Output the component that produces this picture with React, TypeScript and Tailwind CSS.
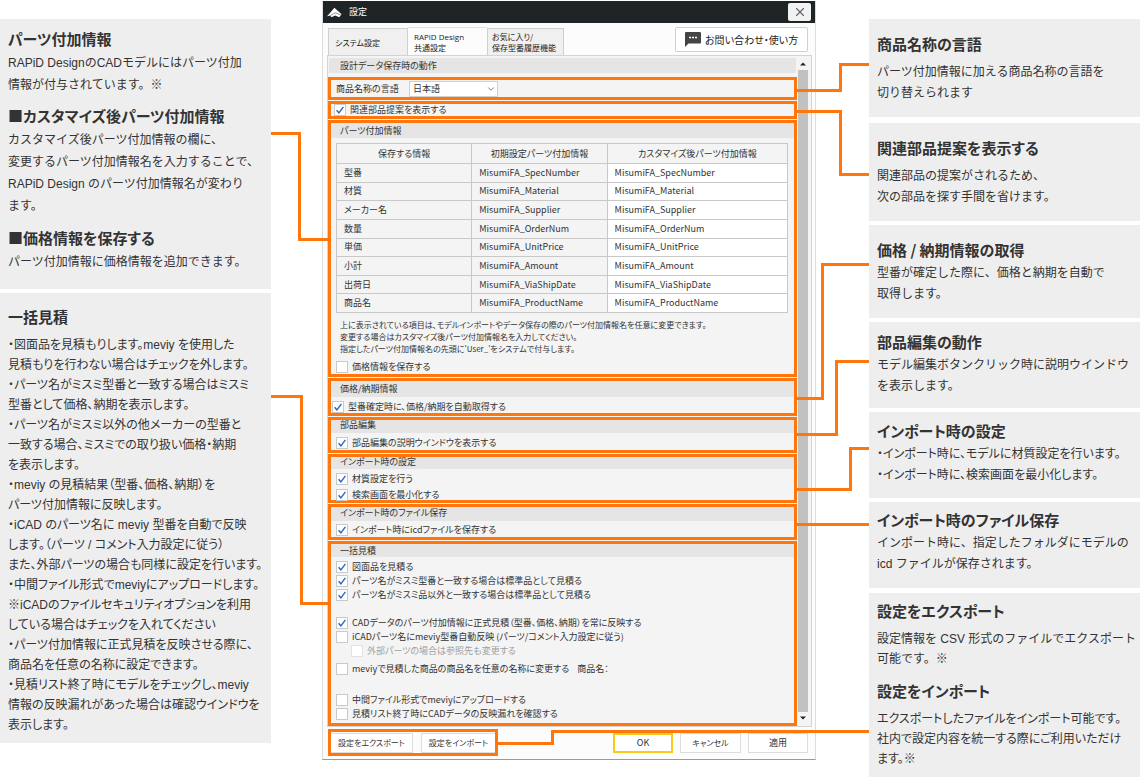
import type { ReactNode } from 'react';
import { ChevronDown, X } from 'lucide-react';

const tableRows = [
  { label: '型番', name: 'MisumiFA_SpecNumber' },
  { label: '材質', name: 'MisumiFA_Material' },
  { label: 'メーカー名', name: 'MisumiFA_Supplier' },
  { label: '数量', name: 'MisumiFA_OrderNum' },
  { label: '単価', name: 'MisumiFA_UnitPrice' },
  { label: '小計', name: 'MisumiFA_Amount' },
  { label: '出荷日', name: 'MisumiFA_ViaShipDate' },
  { label: '商品名', name: 'MisumiFA_ProductName' },
];

const leftLines = ['M0 133.5H28.5V239.5H57', 'M0 396.5H30.5V603.5H57'];

// x runs from 0 (button row) to 371 (right column)
const rightLines = [
  'M298 90.5H342.5V64.5H371',
  'M298 111.5H342.5V174.5H371',
  'M298 398.5H324.5V264.5H371',
  'M298 434.5H338.5V361.5H371',
  'M298 489.5H352.5V448.5H371',
  'M298 524.5H371',
  'M0 743.5H54.5V731.5H371',
];

function NoteTitle({ children, className = '' }: { children: ReactNode; className?: string }) {
  return (
    <h2
      className={`font-['Noto_Sans_CJK_JP',sans-serif] text-[15px] leading-6 font-bold [font-feature-settings:'palt'] ${className}`}
    >
      {children}
    </h2>
  );
}

function NoteText({
  lines,
  tight = false,
  className = 'mt-px leading-[21px]',
}: {
  lines: string[];
  tight?: boolean;
  className?: string;
}) {
  return (
    <p className={`text-[12px] whitespace-nowrap ${tight ? "[font-feature-settings:'palt']" : ''} ${className}`}>
      {lines.map((line) => (
        <span key={line} className="block">
          {line}
        </span>
      ))}
    </p>
  );
}

function Check({
  label,
  checked = false,
  disabled = false,
  className = '',
}: {
  label: string;
  checked?: boolean;
  disabled?: boolean;
  className?: string;
}) {
  return (
    <label
      className={`flex h-[14px] items-center gap-1 whitespace-nowrap ${disabled ? 'text-[#a0a0a0]' : ''} ${className}`}
    >
      <span className="relative flex">
        <input
          type="checkbox"
          defaultChecked={checked}
          disabled={disabled}
          className="peer size-3 appearance-none border border-[#c9c9c9] bg-white disabled:border-[#e2e2e2]"
        />
        <svg
          viewBox="0 0 12 12"
          className="pointer-events-none absolute inset-0 hidden size-3 peer-checked:block"
          fill="none"
          stroke="#2a66c4"
          strokeWidth="1.4"
        >
          <path d="M2.6 6.2 4.9 8.8 9.4 2.8" />
        </svg>
      </span>
      {label}
    </label>
  );
}

function Frame({ children, className = '' }: { children: ReactNode; className?: string }) {
  return <section className={`border-[3px] border-[#ff760d] ${className}`}>{children}</section>;
}

function Band({ children, className = '' }: { children: ReactNode; className?: string }) {
  return <h3 className={`flex items-center bg-[#e5e5e5] pl-[9px] ${className}`}>{children}</h3>;
}

function DialogButton({ children, className = '' }: { children: ReactNode; className?: string }) {
  return (
    <button type="button" className={`h-5 bg-white text-center whitespace-nowrap ${className}`}>
      {children}
    </button>
  );
}

function SettingsDialog() {
  return (
    <div className="border-x border-b border-[#dcdcdc] border-b-[#9a9a9a] bg-[#fcfcfc] font-['Noto_Sans_CJK_JP',sans-serif] text-[9px] leading-3 text-[#333] [font-feature-settings:'palt']">
      <header className="flex h-[22px] items-center bg-[#1f2427] pr-1 pl-1 text-white">
        <svg viewBox="0 0 15 11" className="h-[11px] w-[15px]" fill="#fff">
          <path d="M0 9.200 2.800 6.200 7.400.8 14.600 7.200 12.200 10.200 8.200 8.600 4.400 10.200 3.200 8.600Z" />
          <path d="M3.400 8.400 8.400 5.800 13.600 7.800" fill="none" stroke="#1f2427" strokeWidth="0.5" />
        </svg>
        <h1 className="ml-[7px]">設定</h1>
        <button
          type="button"
          aria-label="閉じる"
          className="ml-auto flex h-[18px] w-[23px] items-center justify-center rounded-xs bg-[#f2f2f2] text-[#666]"
        >
          <X size={14} strokeWidth={2} />
        </button>
      </header>

      <div className="flex h-8 items-end pr-[7px] pl-[5px] text-[8px] leading-[11px] text-[#222]">
        <button type="button" className="h-[27px] w-20 border border-b-0 border-[#cfcfcf] bg-[#f0f0f0] pl-[6px] text-left">
          システム設定
        </button>
        <button
          type="button"
          className="h-7 w-[79px] border-t border-[#e2e2e2] bg-[#fcfcfc] pl-[6px] text-left font-['Open_Sans','Noto_Sans_CJK_JP',sans-serif]"
        >
          RAPiD Design
          <br />
          共通設定
        </button>
        <button
          type="button"
          className="h-[27px] w-[77px] border border-b-0 border-[#cfcfcf] bg-[#f0f0f0] pl-1 text-left whitespace-nowrap"
        >
          お気に入り/
          <br />
          保存型番履歴機能
        </button>
        <button
          type="button"
          className="mb-[3px] ml-auto flex h-[25px] w-[133px] items-center gap-1 rounded-xs border border-[#cfcfcf] bg-white pl-[9px] text-[10px] whitespace-nowrap"
        >
          <svg viewBox="0 0 16 15" className="h-[15px] w-4">
            <path d="M1 0H15Q16 0 16 1V10.500Q16 11.500 15 11.500H3.500L0 15V1Q0 0 1 0Z" fill="#444" />
            <path d="M4 5.500h2M7 5.500h2M10 5.500h2" stroke="#fff" strokeWidth="1.600" />
          </svg>
          お問い合わせ・使い方
        </button>
      </div>

      <div className="mr-[3px] ml-1 flex border border-[#d4d4d4] bg-[#f4f4f4] pr-[3px]">
        <div className="flex min-w-0 flex-1 flex-col gap-px pt-[2px]">
          <Band className="mx-px mb-[3px] h-[15px] pl-[11px]">設計データ保存時の動作</Band>

          <Frame className="flex h-[23px] items-center pl-[5px]">
            <label htmlFor="language" className="w-[73px]">
              商品名称の言語
            </label>
            <div className="relative">
              <select
                id="language"
                className="block h-4 w-[89px] appearance-none border border-[#d0d0d0] bg-white pl-[3px] leading-3"
              >
                <option>日本語</option>
              </select>
              <ChevronDown
                size={10}
                strokeWidth={2}
                className="pointer-events-none absolute top-[3px] right-[2px] text-[#666]"
              />
            </div>
          </Frame>

          <Frame className="flex h-[18px] items-center pl-[3px]">
            <Check label="関連部品提案を表示する" checked />
          </Frame>

          <Frame>
            <Band className="h-[15px]">パーツ付加情報</Band>
            <div className="pt-[5px] pr-[6px] pl-[5px]">
              <table className="h-[170px] w-full table-fixed border-collapse">
                <thead>
                  <tr className="h-5">
                    <th className="w-[30%] border border-[#c8c8c8] font-normal">保存する情報</th>
                    <th className="w-[30%] border border-[#c8c8c8] font-normal">初期設定パーツ付加情報</th>
                    <th className="border border-[#c8c8c8] font-normal">カスタマイズ後パーツ付加情報</th>
                  </tr>
                </thead>
                <tbody>
                  {tableRows.map((row) => (
                    <tr key={row.name}>
                      <td className="border border-[#c8c8c8] pl-[7px]">{row.label}</td>
                      <td className="border border-[#c8c8c8] pl-[7px]">{row.name}</td>
                      <td className="border border-[#c8c8c8] bg-white pl-[7px]">
                        <input
                          type="text"
                          aria-label={`${row.label}のカスタマイズ後パーツ付加情報`}
                          defaultValue={row.name}
                          className="block h-3 w-full bg-transparent"
                        />
                      </td>
                    </tr>
                  ))}
                </tbody>
              </table>
              <p className="mt-[6px] pl-1 text-[8px] whitespace-nowrap">
                上に表示されている項目は、モデルインポートやデータ保存の際のパーツ付加情報名を任意に変更できます。
                <br />
                変更する場合はカスタマイズ後パーツ付加情報名を入力してください。
                <br />
                指定したパーツ付加情報名の先頭に'User_'をシステムで付与します。
              </p>
              <Check label="価格情報を保存する" className="mt-[5px]" />
            </div>
          </Frame>

          <Frame className="h-[38px]">
            <Band className="h-4">価格/納期情報</Band>
            <Check label="型番確定時に、価格/納期を自動取得する" checked className="mt-[3px] ml-px" />
          </Frame>

          <Frame className="h-9">
            <Band className="h-[13px] pb-1">部品編集</Band>
            <Check label="部品編集の説明ウインドウを表示する" checked className="mt-[3px] ml-[5px]" />
          </Frame>

          <Frame className="h-[49px]">
            <Band className="h-3 pb-[3px]">インポート時の設定</Band>
            <div className="flex flex-col gap-[2px] pt-[3px] pl-[5px]">
              <Check label="材質設定を行う" checked />
              <Check label="検索画面を最小化する" checked />
            </div>
          </Frame>

          <Frame className="h-9">
            <Band className="h-[14px] pb-[2px]">インポート時のファイル保存</Band>
            <Check label="インポート時にicdファイルを保存する" checked className="mt-[2px] ml-[5px]" />
          </Frame>

          <Frame>
            <Band className="h-[13px]">一括見積</Band>
            <div className="pt-[3px] pb-[2px] pl-[5px]">
              <Check label="図面品を見積る" checked />
              <Check label="パーツ名がミスミ型番と一致する場合は標準品として見積る" checked />
              <Check label="パーツ名がミスミ品以外と一致する場合は標準品として見積る" checked />
              <Check
                label="CADデータのパーツ付加情報に正式見積（型番、価格、納期）を常に反映する"
                checked
                className="mt-[14px]"
              />
              <Check label="iCADパーツ名にmeviy型番自動反映 (パーツ/コメント入力設定に従う)" />
              <Check label="外部パーツの場合は参照先も変更する" disabled className="ml-[15px]" />
              <div className="mt-1 flex items-center gap-2">
                <Check label="meviyで見積した商品の商品名を任意の名称に変更する" />
                <span>商品名：</span>
              </div>
              <Check label="中間ファイル形式でmeviyにアップロードする" className="mt-[17px]" />
              <Check label="見積リスト終了時にCADデータの反映漏れを確認する" />
            </div>
          </Frame>
        </div>

        <div aria-hidden="true" className="ml-px flex w-[10px] flex-col items-center">
          <svg viewBox="0 0 10 14" className="h-[14px] w-[10px]" fill="#222">
            <path d="M2 9.500 5 6.500 8 9.500Z" />
          </svg>
          <div className="w-full flex-1 bg-[#c1c1c1]" />
          <svg viewBox="0 0 10 14" className="h-[14px] w-[10px]" fill="#222">
            <path d="M2 4.500 5 7.500 8 4.500Z" />
          </svg>
        </div>
      </div>

      <footer className="mt-[2px] flex items-center justify-between pr-[7px] pb-[3px] pl-[5px]">
        <div className="flex h-[27px] items-center gap-2 border-[3px] border-[#ff760d] text-[8px]">
          <DialogButton className="w-[82px] border border-l-0 border-[#ddd]">設定をエクスポート</DialogButton>
          <DialogButton className="w-[74px] border border-r-0 border-[#ddd]">設定をインポート</DialogButton>
        </div>
        <div className="flex gap-[7px]">
          <DialogButton className="w-[60px] border-2 border-[#fbc91b]">OK</DialogButton>
          <DialogButton className="w-[61px] border border-[#ddd] text-[8px]">キャンセル</DialogButton>
          <DialogButton className="w-[60px] border border-[#ddd]">適用</DialogButton>
        </div>
      </footer>
    </div>
  );
}

export default function App() {
  return (
    <main
      lang="ja"
      className="relative grid grid-cols-[271px_minmax(0,1fr)_271px] items-start bg-white font-['Liberation_Sans','Noto_Sans_CJK_JP',sans-serif] text-[#333]"
    >
      <div className="flex flex-col gap-1 pt-[19px]">
        <article className="bg-[#eee] pt-2 pb-4 pl-2">
          <NoteTitle>パーツ付加情報</NoteTitle>
          <NoteText
            className="mt-px leading-[22px]"
            lines={['RAPiD DesignのCADモデルにはパーツ付加', '情報が付与されています。※']}
          />
          <NoteTitle className="mt-2">■カスタマイズ後パーツ付加情報</NoteTitle>
          <NoteText
            className="mt-px leading-[22px]"
            lines={[
              'カスタマイズ後パーツ付加情報の欄に、',
              '変更するパーツ付加情報名を入力することで、',
              'RAPiD Design のパーツ付加情報名が変わり',
              'ます。',
            ]}
          />
          <NoteTitle className="mt-[9px]">■価格情報を保存する</NoteTitle>
          <NoteText className="mt-px leading-[22px]" lines={['パーツ付加情報に価格情報を追加できます。']} />
        </article>

        <article className="bg-[#eee] pt-3 pb-2 pl-2">
          <NoteTitle>一括見積</NoteTitle>
          <NoteText
            tight
            className="mt-[6px] leading-5"
            lines={[
              '・図面品を見積もりします。meviy を使用した',
              '見積もりを行わない場合はチェックを外します。',
              '・パーツ名がミスミ型番と一致する場合はミスミ',
              '型番として価格、納期を表示します。',
              '・パーツ名がミスミ以外の他メーカーの型番と',
              '一致する場合、ミスミでの取り扱い価格・納期',
              'を表示します。',
              '・meviy の見積結果（型番、価格、納期）を',
              'パーツ付加情報に反映します。',
              '・iCAD のパーツ名に meviy 型番を自動で反映',
              'します。（パーツ / コメント入力設定に従う）',
              'また、外部パーツの場合も同様に設定を行います。',
              '・中間ファイル形式でmeviyにアップロードします。',
              '※iCADのファイルセキュリティオプションを利用',
              'している場合はチェックを入れてください',
              '・パーツ付加情報に正式見積を反映させる際に、',
              '商品名を任意の名称に設定できます。',
              '・見積リスト終了時にモデルをチェックし、meviy',
              '情報の反映漏れがあった場合は確認ウインドウを',
              '表示します。',
            ]}
          />
        </article>
      </div>

      <div className="pt-px pr-[53px] pl-[51px]">
        <SettingsDialog />
      </div>

      <div className="flex flex-col gap-1 pt-[19px]">
        <article className="mb-[2px] bg-[#eee] py-[13px] pl-2">
          <NoteTitle>商品名称の言語</NoteTitle>
          <NoteText
            className="mt-[6px] leading-[21px]"
            lines={['パーツ付加情報に加える商品名称の言語を', '切り替えられます']}
          />
        </article>
        <article className="bg-[#eee] py-[13px] pl-2">
          <NoteTitle>関連部品提案を表示する</NoteTitle>
          <NoteText
            className="mt-[6px] leading-[21px]"
            lines={['関連部品の提案がされるため、', '次の部品を探す手間を省けます。']}
          />
        </article>
        <article className="bg-[#eee] py-[13px] pl-2">
          <NoteTitle>価格 / 納期情報の取得</NoteTitle>
          <NoteText lines={['型番が確定した際に、価格と納期を自動で', '取得します。']} />
        </article>
        <article className="bg-[#eee] pt-2 pb-[11px] pl-2">
          <NoteTitle>部品編集の動作</NoteTitle>
          <NoteText lines={['モデル編集ボタンクリック時に説明ウインドウ', 'を表示します。']} />
        </article>
        <article className="bg-[#eee] pt-[7px] pb-3 pl-2">
          <NoteTitle>インポート時の設定</NoteTitle>
          <NoteText
            tight
            lines={['・インポート時に、モデルに材質設定を行います。', '・インポート時に、検索画面を最小化します。']}
          />
        </article>
        <article className="mb-px bg-[#eee] pt-[6px] pb-[13px] pl-2">
          <NoteTitle>インポート時のファイル保存</NoteTitle>
          <NoteText lines={['インポート時に、指定したフォルダにモデルの', 'icd ファイルが保存されます。']} />
        </article>
        <article className="bg-[#eee] pt-[6px] pb-2 pl-2">
          <NoteTitle>設定をエクスポート</NoteTitle>
          <NoteText
            className="mt-[6px] leading-5"
            lines={['設定情報を CSV 形式のファイルでエクスポート', '可能です。※']}
          />
          <NoteTitle className="mt-[10px]">設定をインポート</NoteTitle>
          <NoteText
            tight
            className="mt-[6px] leading-5"
            lines={['エクスポートしたファイルをインポート可能です。', '社内で設定内容を統一する際にご利用いただけ', 'ます。※']}
          />
        </article>
      </div>

      {/* callout lines running over the dialog edges */}
      <svg
        aria-hidden="true"
        className="pointer-events-none absolute top-0 left-[271px] h-[777px] w-[57px]"
        fill="none"
        stroke="#ff760d"
        strokeWidth="3"
      >
        {leftLines.map((d) => (
          <path key={d} d={d} />
        ))}
      </svg>
      <svg
        aria-hidden="true"
        className="pointer-events-none absolute top-0 right-[271px] h-[777px] w-[371px]"
        fill="none"
        stroke="#ff760d"
        strokeWidth="3"
      >
        {rightLines.map((d) => (
          <path key={d} d={d} />
        ))}
      </svg>
    </main>
  );
}
